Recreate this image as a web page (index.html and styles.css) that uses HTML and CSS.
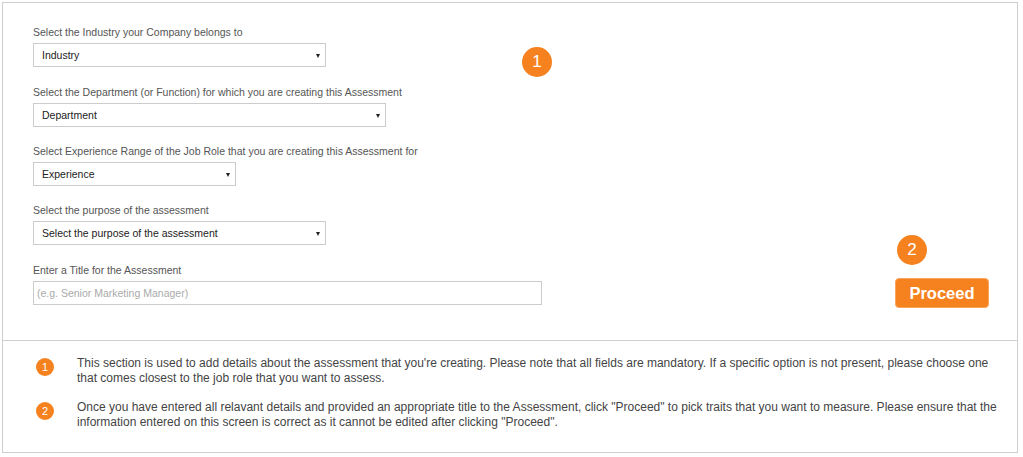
FILE: index.html
```html
<!DOCTYPE html>
<html>
<head>
<meta charset="utf-8">
<link rel="stylesheet" href="styles.css">
</head>
<body>
<div class="panel">
  <section class="top">
    <form class="form">
      <div class="group g1">
        <label class="label">Select the Industry your Company belongs to</label>
        <div class="select w-293"><span>Industry</span></div>
      </div>
      <div class="group g2">
        <label class="label">Select the Department (or Function) for which you are creating this Assessment</label>
        <div class="select w-353"><span>Department</span></div>
      </div>
      <div class="group g3">
        <label class="label">Select Experience Range of the Job Role that you are creating this Assessment for</label>
        <div class="select w-203"><span>Experience</span></div>
      </div>
      <div class="group g4">
        <label class="label">Select the purpose of the assessment</label>
        <div class="select w-293"><span>Select the purpose of the assessment</span></div>
      </div>
      <div class="group last">
        <label class="label">Enter a Title for the Assessment</label>
        <input class="text-input" type="text" placeholder="(e.g. Senior Marketing Manager)">
      </div>
    </form>
    <div class="marker marker-one">1</div>
    <div class="aside">
      <div class="marker">2</div>
      <button class="proceed" type="button">Proceed</button>
    </div>
  </section>
  <section class="help">
    <div class="help-item">
      <div class="dot">1</div>
      <p>This section is used to add details about the assessment that you're creating. Please note that all fields are mandatory. If a specific option is not present, please choose one that comes closest to the job role that you want to assess.</p>
    </div>
    <div class="help-item">
      <div class="dot">2</div>
      <p>Once you have entered all relavant details and provided an appropriate title to the Assessment, click "Proceed" to pick traits that you want to measure. Please ensure that the information entered on this screen is correct as it cannot be edited after clicking "Proceed".</p>
    </div>
  </section>
</div>
</body>
</html>
```

FILE: styles.css
```css
* { box-sizing: border-box; }
body {
  margin: 0;
  background: #fff;
  font-family: "Liberation Sans", Arial, sans-serif;
}
.panel {
  margin: 2px 0 0 2px;
  width: 1016px;
  height: 451px;
  border: 1px solid #cfcfcf;
  display: flex;
  flex-direction: column;
}
.top {
  position: relative;
  display: flex;
  justify-content: space-between;
  align-items: flex-start;
  padding: 22px 28px 32px 30px;
  border-bottom: 1px solid #cfcfcf;
  height: 338px;
}
.form { display: flex; flex-direction: column; }
.group { display: flex; flex-direction: column; align-items: flex-start; }
.g1 { margin-bottom: 18px; }
.g2 { margin-bottom: 17px; }
.g3 { margin-bottom: 17px; }
.g4 { margin-bottom: 18px; }
.label {
  font-size: 10.5px;
  line-height: 14px;
  color: #555;
  margin-bottom: 4px;
}
.select {
  position: relative;
  height: 24px;
  border: 1px solid #ccc;
  background: #fff;
  padding-left: 8px;
  font-size: 10.5px;
  line-height: 22px;
  color: #222;
}
.select::after {
  content: "";
  position: absolute;
  right: 5px;
  top: 10px;
  border-left: 2.5px solid transparent;
  border-right: 2.5px solid transparent;
  border-top: 4px solid #222;
}
.w-293 { width: 293px; }
.w-353 { width: 353px; }
.w-203 { width: 203px; }
.text-input {
  width: 509px;
  height: 24px;
  border: 1px solid #ccc;
  padding: 0 0 0 3px;
  font-family: "Liberation Sans", Arial, sans-serif;
  font-size: 10.5px;
  color: #222;
  outline: none;
}
.text-input::placeholder { color: #aaa; }
.marker {
  width: 30px;
  height: 30px;
  border-radius: 50%;
  background: #f5821f;
  color: #fff;
  font-size: 17px;
  line-height: 30px;
  text-align: center;
}
.marker-one {
  position: absolute;
  left: 519px;
  top: 44px;
}
.aside {
  align-self: flex-end;
  display: flex;
  flex-direction: column;
  align-items: flex-start;
  gap: 13px;
}
.aside .marker { margin-left: 2px; }
.proceed {
  width: 94px;
  height: 30px;
  border: 1px solid #f9a65c;
  border-radius: 4px;
  background: #f5821f;
  color: #fff;
  font-family: "Liberation Sans", Arial, sans-serif;
  font-weight: bold;
  font-size: 16.5px;
  padding: 0;
}
.help {
  flex: 1;
  padding: 15px 20px 0 33px;
  display: flex;
  flex-direction: column;
  gap: 14px;
}
.help-item { display: flex; align-items: flex-start; }
.dot {
  flex: none;
  width: 18px;
  height: 18px;
  margin-top: 2px;
  border-radius: 50%;
  background: #f5821f;
  color: #fff;
  font-size: 11px;
  line-height: 18px;
  text-align: center;
}
.help-item p {
  margin: 0 0 0 23px;
  font-size: 12px;
  line-height: 15px;
  color: #444;
}
```
